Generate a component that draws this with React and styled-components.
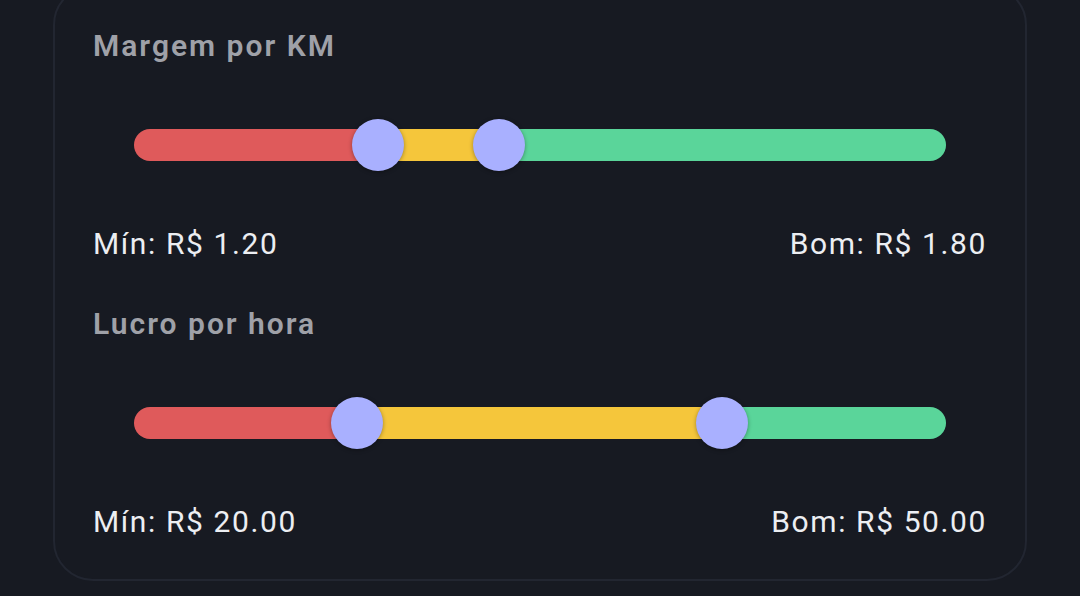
import React from "react";
import styled, { createGlobalStyle } from "styled-components";

const GlobalStyle = createGlobalStyle`
    html, body {
        margin: 0;
        padding: 0;
        background-color: #171a22;
        font-family: Roboto, "Noto Sans", Arial, sans-serif;
    }
`;

const Page = styled.div`
    width: 1080px;
    height: 596px;
    overflow: hidden;
    background-color: #171a22;
`;

const Card = styled.div`
    margin: -15px 53px 0;
    padding: 41px 38px 39px;
    border: 2px solid #222631;
    border-radius: 40px;
    display: flex;
    flex-direction: column;
    gap: 44px;
`;

const Section = styled.div`
    display: flex;
    flex-direction: column;
`;

const Title = styled.div`
    font-size: 30px;
    line-height: 36px;
    font-weight: 600;
    letter-spacing: 2px;
    color: #9fa1a8;
`;

const SliderArea = styled.div`
    height: 162px;
    padding: 0 41px;
    display: flex;
    align-items: center;
`;

const Track = styled.div`
    position: relative;
    flex: 1;
    height: 32px;
    display: flex;
`;

const Segment = styled.div`
    height: 100%;
    background-color: ${(p) => p.$color};
    border-radius: ${(p) => p.$radius};
`;

const Thumb = styled.div`
    position: absolute;
    top: 50%;
    width: 52px;
    height: 52px;
    margin: -26px 0 0 -26px;
    border-radius: 50%;
    background-color: #a9b0ff;
    box-shadow: 0 1px 4px rgba(0, 0, 0, 0.35);
`;

const Labels = styled.div`
    display: flex;
    justify-content: space-between;
    font-size: 30px;
    line-height: 36px;
    font-weight: 400;
    letter-spacing: 1.6px;
    color: #eceef2;
`;

const RangeSlider = ({ low, high }) => (
    <SliderArea>
        <Track>
            <Segment $color="#df5a5b" $radius="16px 0 0 16px" style={{ width: `${low * 100}%` }} />
            <Segment $color="#f5c63b" $radius="0" style={{ width: `${(high - low) * 100}%` }} />
            <Segment $color="#5ad59a" $radius="0 16px 16px 0" style={{ flex: 1 }} />
            <Thumb style={{ left: `${low * 100}%` }} />
            <Thumb style={{ left: `${high * 100}%` }} />
        </Track>
    </SliderArea>
);

const settings = [
    { title: "Margem por KM", low: 0.3, high: 0.449, min: "R$ 1.20", good: "R$ 1.80" },
    { title: "Lucro por hora", low: 0.2746, high: 0.7241, min: "R$ 20.00", good: "R$ 50.00" },
];

export default function App() {
    return (
        <Page>
            <GlobalStyle />
            <Card>
                {settings.map((s) => (
                    <Section key={s.title}>
                        <Title>{s.title}</Title>
                        <RangeSlider low={s.low} high={s.high} />
                        <Labels>
                            <span>Mín: {s.min}</span>
                            <span>Bom: {s.good}</span>
                        </Labels>
                    </Section>
                ))}
            </Card>
        </Page>
    );
}
